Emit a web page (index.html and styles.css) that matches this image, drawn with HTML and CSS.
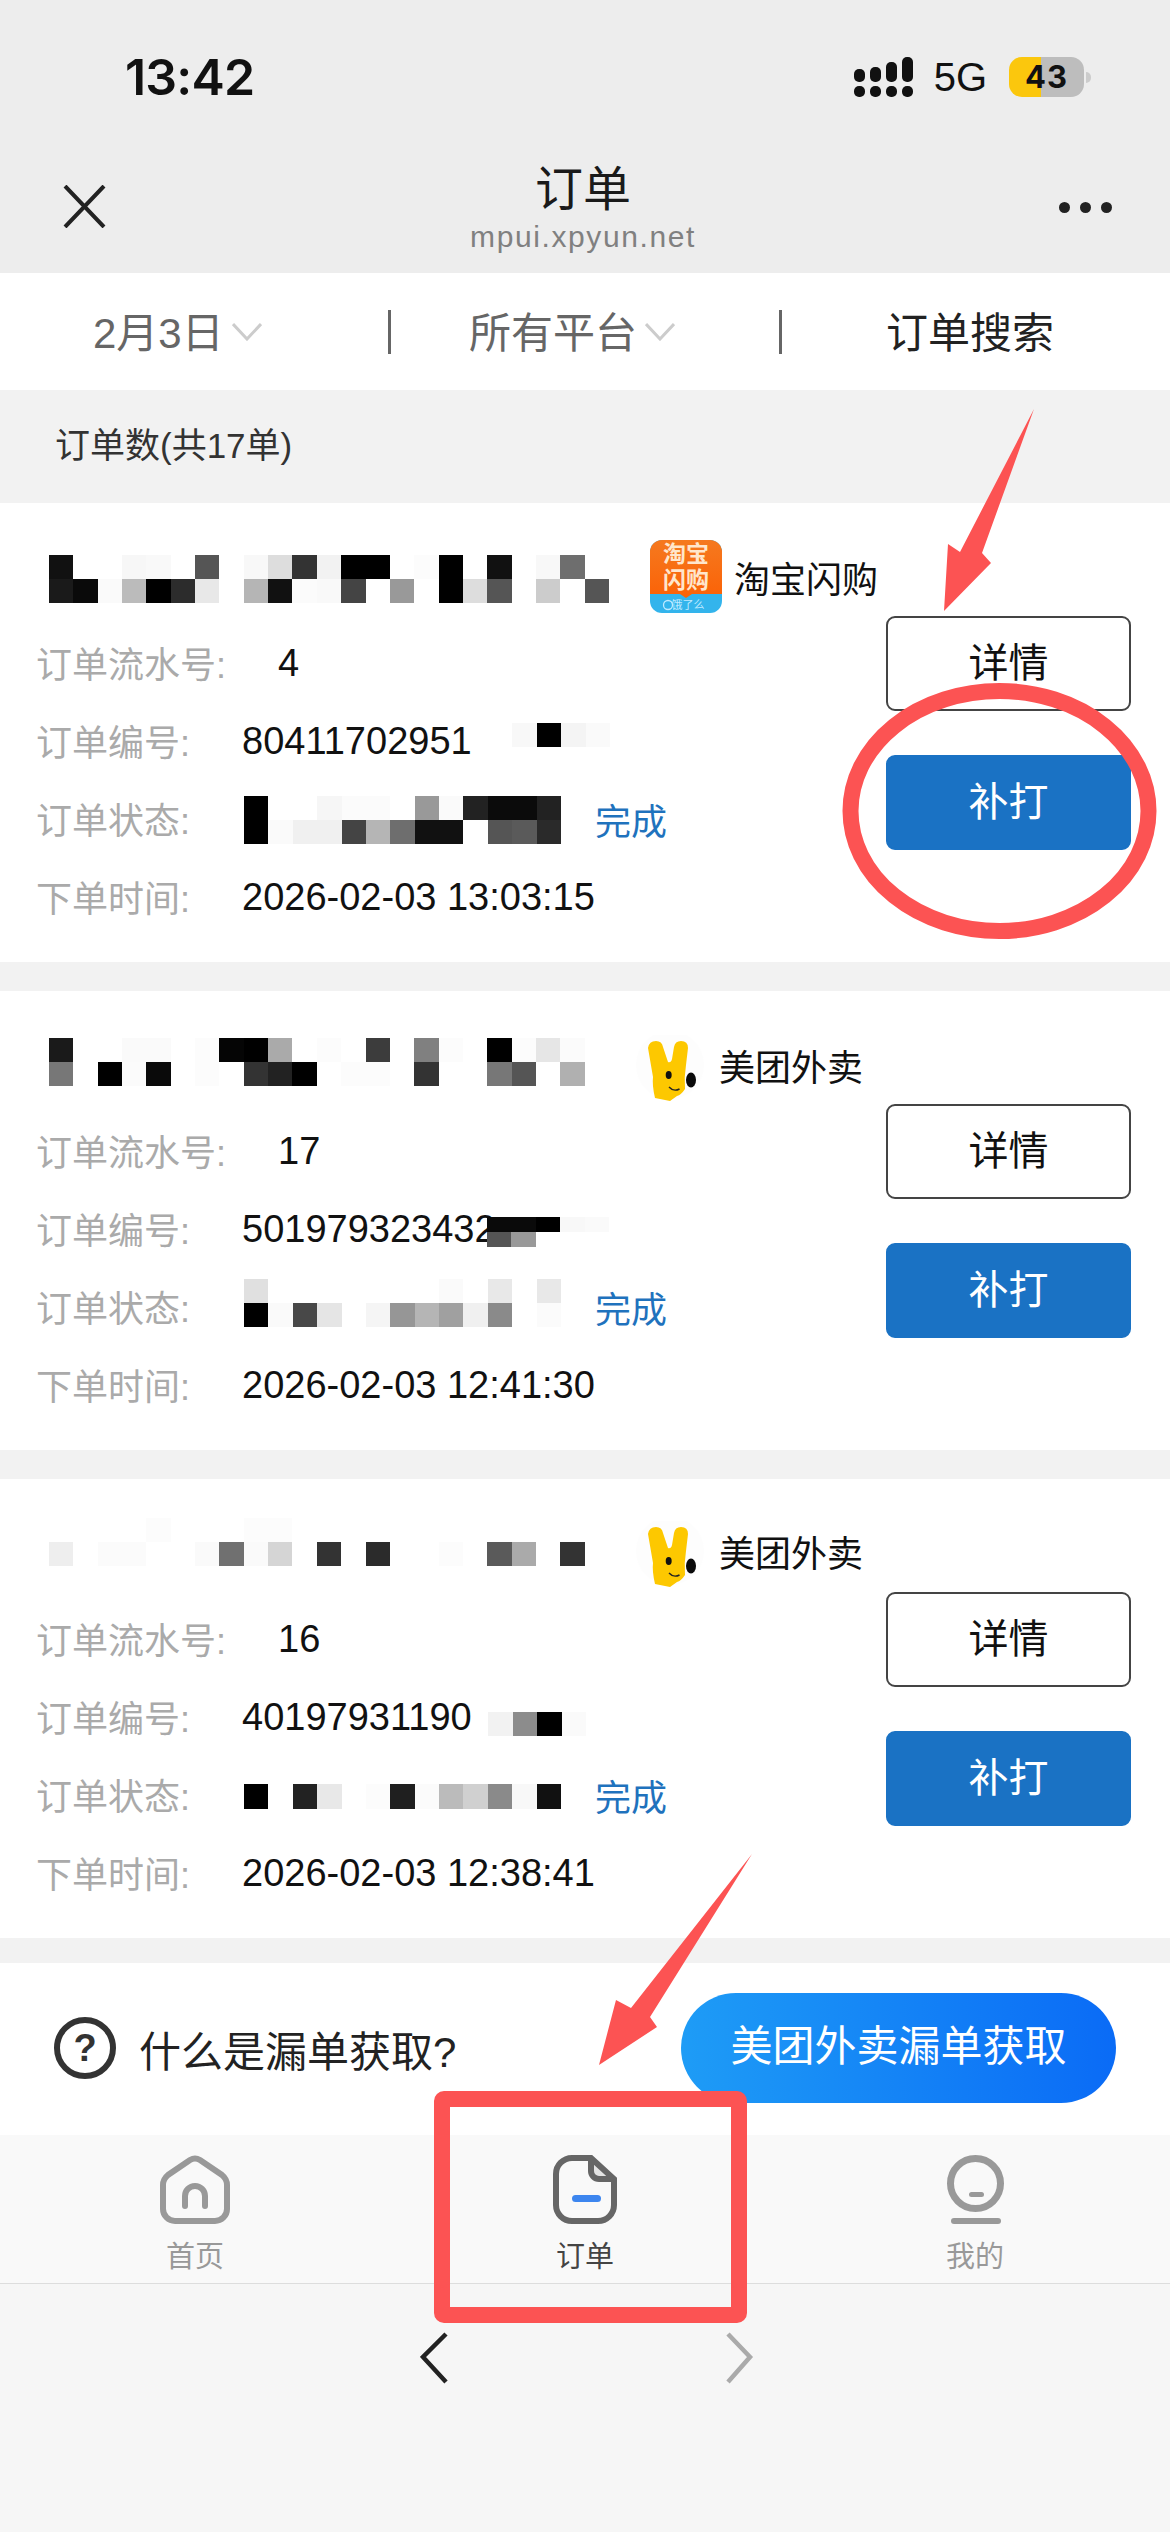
FILE: index.html
```html
<!DOCTYPE html>
<html lang="zh-CN">
<head>
    <meta charset="UTF-8">
    <meta name="viewport" content="width=device-width, initial-scale=1.0">
    <title>订单</title>
    <link rel="stylesheet" href="styles.css">
</head>
<body>
<div class="page">

    <div class="top">
        <div class="status">
            <span class="time">13:42</span>
            <div class="status-right">
                <svg class="signal" width="60" height="40" viewBox="0 0 60 40" fill="#111">
                    <rect x="0" y="12" width="11" height="13" rx="5"/>
                    <rect x="16" y="10" width="11" height="15" rx="5"/>
                    <rect x="32" y="5" width="11" height="20" rx="5"/>
                    <rect x="48" y="0" width="11" height="25" rx="5"/>
                    <rect x="0" y="29" width="11" height="11" rx="5"/>
                    <rect x="16" y="29" width="11" height="11" rx="5"/>
                    <rect x="32" y="29" width="11" height="11" rx="5"/>
                    <rect x="48" y="29" width="11" height="11" rx="5"/>
                </svg>
                <span class="net">5G</span>
                <span class="battery">43</span>
            </div>
        </div>
        <div class="nav">
            <svg class="nav-close" width="43" height="43" viewBox="0 0 43 43" fill="none" stroke="#222" stroke-width="4">
                <path d="M2,1 L41,42 M41,1 L2,42"/>
            </svg>
            <div class="nav-title">
                <div class="nav-name">订单</div>
                <div class="nav-url">mpui.xpyun.net</div>
            </div>
            <div class="nav-more"><i></i><i></i><i></i></div>
        </div>
    </div>

    <div class="filters">
        <div class="filter filter-date">2月3日
            <svg width="30" height="18" viewBox="0 0 30 18" fill="none" stroke="#ccc" stroke-width="3"><path d="M1,1 L15,16 L29,1"/></svg>
        </div>
        <div class="filter filter-platform">所有平台
            <svg width="30" height="18" viewBox="0 0 30 18" fill="none" stroke="#ccc" stroke-width="3"><path d="M1,1 L15,16 L29,1"/></svg>
        </div>
        <div class="filter filter-search">订单搜索</div>
    </div>

    <div class="count">订单数(共17单)</div>

    <div class="cards">

        <div class="card card-1">
            <div class="card-info">
                <div class="card-head">
                    <svg class="mask name-mask" viewBox="0 0 23 2" preserveAspectRatio="none" shape-rendering="crispEdges">
                        <rect x="0" y="0" width="1" height="1" fill="#111"/>
                        <rect x="3" y="0" width="1" height="1" fill="#f7f7f7"/>
                        <rect x="4" y="0" width="1" height="1" fill="#f9f9f9"/>
                        <rect x="6" y="0" width="1" height="1" fill="#555"/>
                        <rect x="8" y="0" width="1" height="1" fill="#f8f8f8"/>
                        <rect x="9" y="0" width="1" height="1" fill="#ddd"/>
                        <rect x="10" y="0" width="1" height="1" fill="#333"/>
                        <rect x="11" y="0" width="1" height="1" fill="#f2f2f2"/>
                        <rect x="12" y="0" width="2" height="1" fill="#000"/>
                        <rect x="15" y="0" width="1" height="1" fill="#fcfcfc"/>
                        <rect x="16" y="0" width="1" height="1" fill="#000"/>
                        <rect x="18" y="0" width="1" height="1" fill="#111"/>
                        <rect x="20" y="0" width="1" height="1" fill="#f8f8f8"/>
                        <rect x="21" y="0" width="1" height="1" fill="#6e6e6e"/>
                        <rect x="0" y="1" width="1" height="1" fill="#1a1a1a"/>
                        <rect x="1" y="1" width="1" height="1" fill="#0a0a0a"/>
                        <rect x="2" y="1" width="1" height="1" fill="#fafafa"/>
                        <rect x="3" y="1" width="1" height="1" fill="#bbb"/>
                        <rect x="4" y="1" width="1" height="1" fill="#000"/>
                        <rect x="5" y="1" width="1" height="1" fill="#2c2c2c"/>
                        <rect x="6" y="1" width="1" height="1" fill="#e8e8e8"/>
                        <rect x="8" y="1" width="1" height="1" fill="#b5b5b5"/>
                        <rect x="9" y="1" width="1" height="1" fill="#111"/>
                        <rect x="10" y="1" width="1" height="1" fill="#fbfbfb"/>
                        <rect x="11" y="1" width="1" height="1" fill="#f9f9f9"/>
                        <rect x="12" y="1" width="1" height="1" fill="#444"/>
                        <rect x="14" y="1" width="1" height="1" fill="#999"/>
                        <rect x="16" y="1" width="1" height="1" fill="#000"/>
                        <rect x="17" y="1" width="1" height="1" fill="#ddd"/>
                        <rect x="18" y="1" width="1" height="1" fill="#555"/>
                        <rect x="20" y="1" width="1" height="1" fill="#ccc"/>
                        <rect x="22" y="1" width="1" height="1" fill="#555"/>
                    </svg>
                    <div class="platform platform-tb">
                        <svg width="72" height="73" viewBox="0 0 72 73">
                            <defs>
                                <linearGradient id="tbOrange" x1="0" y1="0" x2="0" y2="1">
                                    <stop offset="0" stop-color="#f5791f"/>
                                    <stop offset="1" stop-color="#fb6207"/>
                                </linearGradient>
                            </defs>
                            <rect width="72" height="73" rx="12" fill="#33b4ec"/>
                            <path d="M0,12 A12,12 0 0 1 12,0 H60 A12,12 0 0 1 72,12 V54 H42 L36,58 L30,54 H0 Z" fill="url(#tbOrange)"/>
                            <text class="tb-big" x="36" y="22">淘宝</text>
                            <text class="tb-big" x="36" y="48">闪购</text>
                            <text class="tb-small" x="38" y="69">饿了么</text>
                            <circle cx="18" cy="65" r="4.5" fill="none" stroke="#bfeaff" stroke-width="1.3"/>
                        </svg>
                        <span class="platform-name">淘宝闪购</span>
                    </div>
                </div>
                <div class="row"><span class="label">订单流水号:</span><span class="value">4</span></div>
                <div class="row"><span class="label">订单编号:</span><span class="value order-no">80411702951</span>
                    <svg class="mask order-mask" viewBox="0 0 4 1" preserveAspectRatio="none" shape-rendering="crispEdges">
                        <rect x="0" y="0" width="1" height="1" fill="#f8f8f8"/>
                        <rect x="1" y="0" width="1" height="1" fill="#000"/>
                        <rect x="2" y="0" width="1" height="1" fill="#f4f4f4"/>
                        <rect x="3" y="0" width="1" height="1" fill="#fafafa"/>
                    </svg>
                </div>
                <div class="row"><span class="label">订单状态:</span>
                    <svg class="mask state-mask" viewBox="0 0 13 2" preserveAspectRatio="none" shape-rendering="crispEdges">
                        <rect x="0" y="0" width="1" height="2" fill="#000"/>
                        <rect x="3" y="0" width="1" height="1" fill="#f6f6f6"/>
                        <rect x="4" y="0" width="2" height="1" fill="#fbfbfb"/>
                        <rect x="7" y="0" width="1" height="1" fill="#999"/>
                        <rect x="8" y="0" width="1" height="1" fill="#fafafa"/>
                        <rect x="9" y="0" width="1" height="1" fill="#222"/>
                        <rect x="10" y="0" width="2" height="1" fill="#0b0b0b"/>
                        <rect x="12" y="0" width="1" height="1" fill="#222"/>
                        <rect x="1" y="1" width="1" height="1" fill="#fafafa"/>
                        <rect x="2" y="1" width="2" height="1" fill="#f0f0f0"/>
                        <rect x="4" y="1" width="1" height="1" fill="#444"/>
                        <rect x="5" y="1" width="1" height="1" fill="#b5b5b5"/>
                        <rect x="6" y="1" width="1" height="1" fill="#6e6e6e"/>
                        <rect x="7" y="1" width="2" height="1" fill="#111"/>
                        <rect x="10" y="1" width="1" height="1" fill="#555"/>
                        <rect x="11" y="1" width="1" height="1" fill="#5a5a5a"/>
                        <rect x="12" y="1" width="1" height="1" fill="#2a2a2a"/>
                    </svg>
                    <span class="state">完成</span>
                </div>
                <div class="row"><span class="label">下单时间:</span><span class="value">2026-02-03 13:03:15</span></div>
            </div>
            <div class="card-actions">
                <div class="btn btn-line">详情</div>
                <div class="btn btn-blue">补打</div>
            </div>
        </div>

        <div class="card card-2">
            <div class="card-info">
                <div class="card-head">
                    <svg class="mask name-mask" viewBox="0 0 23 2" preserveAspectRatio="none" shape-rendering="crispEdges">
                        <rect x="0" y="0" width="1" height="1" fill="#1a1a1a"/>
                        <rect x="3" y="0" width="2" height="1" fill="#fafafa"/>
                        <rect x="6" y="0" width="1" height="1" fill="#fcfcfc"/>
                        <rect x="7" y="0" width="1" height="1" fill="#050505"/>
                        <rect x="8" y="0" width="1" height="1" fill="#000"/>
                        <rect x="9" y="0" width="1" height="1" fill="#aaa"/>
                        <rect x="11" y="0" width="1" height="1" fill="#fcfcfc"/>
                        <rect x="13" y="0" width="1" height="1" fill="#3c3c3c"/>
                        <rect x="15" y="0" width="1" height="1" fill="#808080"/>
                        <rect x="16" y="0" width="1" height="1" fill="#fcfcfc"/>
                        <rect x="18" y="0" width="1" height="1" fill="#000"/>
                        <rect x="19" y="0" width="1" height="1" fill="#fcfcfc"/>
                        <rect x="20" y="0" width="1" height="1" fill="#e6e6e6"/>
                        <rect x="21" y="0" width="1" height="1" fill="#fbfbfb"/>
                        <rect x="0" y="1" width="1" height="1" fill="#777"/>
                        <rect x="2" y="1" width="1" height="1" fill="#000"/>
                        <rect x="3" y="1" width="1" height="1" fill="#fbfbfb"/>
                        <rect x="4" y="1" width="1" height="1" fill="#0a0a0a"/>
                        <rect x="6" y="1" width="1" height="1" fill="#fcfcfc"/>
                        <rect x="8" y="1" width="1" height="1" fill="#333"/>
                        <rect x="9" y="1" width="1" height="1" fill="#222"/>
                        <rect x="10" y="1" width="1" height="1" fill="#000"/>
                        <rect x="12" y="1" width="2" height="1" fill="#fcfcfc"/>
                        <rect x="15" y="1" width="1" height="1" fill="#333"/>
                        <rect x="18" y="1" width="1" height="1" fill="#777"/>
                        <rect x="19" y="1" width="1" height="1" fill="#555"/>
                        <rect x="21" y="1" width="1" height="1" fill="#b0b0b0"/>
                    </svg>
                    <div class="platform">
                        <svg class="mt-logo" width="72" height="72" viewBox="0 0 72 72">
                            <circle cx="34" cy="30" r="34" fill="#fdfdfd"/>
                            <path d="M12,13 Q13,6 20,6 Q26,6 27,12 L32,27 Q35,28 36,24 L38,12 Q39,6 45,6 Q52,6 52,13 L50,30 Q48,42 49,54 Q45,60 41,61 L34,66 L19,63 Q16,50 17,42 Z" fill="#fdc800"/>
                            <ellipse cx="55" cy="45" rx="5" ry="7.5" fill="#0a0a0a"/>
                            <ellipse cx="32.7" cy="40" rx="3" ry="4" fill="#111"/>
                            <path d="M33,52 Q37.5,57 43.5,54" fill="none" stroke="#222" stroke-width="1.4"/>
                        </svg>
                        <span class="platform-name">美团外卖</span>
                    </div>
                </div>
                <div class="row"><span class="label">订单流水号:</span><span class="value">17</span></div>
                <div class="row"><span class="label">订单编号:</span><span class="value order-no">501979323432</span>
                    <svg class="mask order-mask" viewBox="0 0 5 2" preserveAspectRatio="none" shape-rendering="crispEdges">
                        <rect x="0" y="0" width="2" height="1" fill="#0a0a0a"/>
                        <rect x="2" y="0" width="1" height="1" fill="#000"/>
                        <rect x="3" y="0" width="1" height="1" fill="#f8f8f8"/>
                        <rect x="4" y="0" width="1" height="1" fill="#fafafa"/>
                        <rect x="0" y="1" width="1" height="1" fill="#555"/>
                        <rect x="1" y="1" width="1" height="1" fill="#999"/>
                    </svg>
                </div>
                <div class="row"><span class="label">订单状态:</span>
                    <svg class="mask state-mask" viewBox="0 0 13 2" preserveAspectRatio="none" shape-rendering="crispEdges">
                        <rect x="0" y="0" width="1" height="1" fill="#e0e0e0"/>
                        <rect x="8" y="0" width="1" height="1" fill="#fafafa"/>
                        <rect x="10" y="0" width="1" height="1" fill="#e8e8e8"/>
                        <rect x="12" y="0" width="1" height="1" fill="#e8e8e8"/>
                        <rect x="0" y="1" width="1" height="1" fill="#000"/>
                        <rect x="1" y="1" width="1" height="1" fill="#fafafa"/>
                        <rect x="2" y="1" width="1" height="1" fill="#484848"/>
                        <rect x="3" y="1" width="1" height="1" fill="#e5e5e5"/>
                        <rect x="5" y="1" width="1" height="1" fill="#f5f5f5"/>
                        <rect x="6" y="1" width="1" height="1" fill="#969696"/>
                        <rect x="7" y="1" width="1" height="1" fill="#b5b5b5"/>
                        <rect x="8" y="1" width="1" height="1" fill="#a0a0a0"/>
                        <rect x="9" y="1" width="1" height="1" fill="#f0f0f0"/>
                        <rect x="10" y="1" width="1" height="1" fill="#8a8a8a"/>
                        <rect x="12" y="1" width="1" height="1" fill="#fbfbfb"/>
                    </svg>
                    <span class="state">完成</span>
                </div>
                <div class="row"><span class="label">下单时间:</span><span class="value">2026-02-03 12:41:30</span></div>
            </div>
            <div class="card-actions">
                <div class="btn btn-line">详情</div>
                <div class="btn btn-blue">补打</div>
            </div>
        </div>

        <div class="card card-3">
            <div class="card-info">
                <div class="card-head">
                    <svg class="mask name-mask" viewBox="0 0 23 2" preserveAspectRatio="none" shape-rendering="crispEdges">
                        <rect x="4" y="0" width="1" height="1" fill="#fcfcfc"/>
                        <rect x="8" y="0" width="2" height="1" fill="#fcfcfc"/>
                        <rect x="0" y="1" width="1" height="1" fill="#eee"/>
                        <rect x="2" y="1" width="2" height="1" fill="#fbfbfb"/>
                        <rect x="6" y="1" width="1" height="1" fill="#fafafa"/>
                        <rect x="7" y="1" width="1" height="1" fill="#707070"/>
                        <rect x="8" y="1" width="1" height="1" fill="#fafafa"/>
                        <rect x="9" y="1" width="1" height="1" fill="#d5d5d5"/>
                        <rect x="11" y="1" width="1" height="1" fill="#333"/>
                        <rect x="13" y="1" width="1" height="1" fill="#2b2b2b"/>
                        <rect x="16" y="1" width="1" height="1" fill="#fcfcfc"/>
                        <rect x="18" y="1" width="1" height="1" fill="#5a5a5a"/>
                        <rect x="19" y="1" width="1" height="1" fill="#aaa"/>
                        <rect x="21" y="1" width="1" height="1" fill="#333"/>
                    </svg>
                    <div class="platform">
                        <svg class="mt-logo" width="72" height="72" viewBox="0 0 72 72">
                            <circle cx="34" cy="30" r="34" fill="#fdfdfd"/>
                            <path d="M12,13 Q13,6 20,6 Q26,6 27,12 L32,27 Q35,28 36,24 L38,12 Q39,6 45,6 Q52,6 52,13 L50,30 Q48,42 49,54 Q45,60 41,61 L34,66 L19,63 Q16,50 17,42 Z" fill="#fdc800"/>
                            <ellipse cx="55" cy="45" rx="5" ry="7.5" fill="#0a0a0a"/>
                            <ellipse cx="32.7" cy="40" rx="3" ry="4" fill="#111"/>
                            <path d="M33,52 Q37.5,57 43.5,54" fill="none" stroke="#222" stroke-width="1.4"/>
                        </svg>
                        <span class="platform-name">美团外卖</span>
                    </div>
                </div>
                <div class="row"><span class="label">订单流水号:</span><span class="value">16</span></div>
                <div class="row"><span class="label">订单编号:</span><span class="value order-no">40197931190</span>
                    <svg class="mask order-mask" viewBox="0 0 4 1" preserveAspectRatio="none" shape-rendering="crispEdges">
                        <rect x="0" y="0" width="1" height="1" fill="#f2f2f2"/>
                        <rect x="1" y="0" width="1" height="1" fill="#8c8c8c"/>
                        <rect x="2" y="0" width="1" height="1" fill="#000"/>
                        <rect x="3" y="0" width="1" height="1" fill="#fafafa"/>
                    </svg>
                </div>
                <div class="row"><span class="label">订单状态:</span>
                    <svg class="mask state-mask" viewBox="0 0 13 1" preserveAspectRatio="none" shape-rendering="crispEdges">
                        <rect x="0" y="0" width="1" height="1" fill="#000"/>
                        <rect x="2" y="0" width="1" height="1" fill="#222"/>
                        <rect x="3" y="0" width="1" height="1" fill="#e8e8e8"/>
                        <rect x="5" y="0" width="1" height="1" fill="#fcfcfc"/>
                        <rect x="6" y="0" width="1" height="1" fill="#1f1f1f"/>
                        <rect x="7" y="0" width="1" height="1" fill="#fbfbfb"/>
                        <rect x="8" y="0" width="1" height="1" fill="#bbb"/>
                        <rect x="9" y="0" width="1" height="1" fill="#d0d0d0"/>
                        <rect x="10" y="0" width="1" height="1" fill="#8a8a8a"/>
                        <rect x="11" y="0" width="1" height="1" fill="#f8f8f8"/>
                        <rect x="12" y="0" width="1" height="1" fill="#111"/>
                    </svg>
                    <span class="state">完成</span>
                </div>
                <div class="row"><span class="label">下单时间:</span><span class="value">2026-02-03 12:38:41</span></div>
            </div>
            <div class="card-actions">
                <div class="btn btn-line">详情</div>
                <div class="btn btn-blue">补打</div>
            </div>
        </div>

    </div>

    <div class="missed">
        <div class="missed-help">
            <span class="help-icon">?</span>
            <span>什么是漏单获取?</span>
        </div>
        <div class="missed-btn">美团外卖漏单获取</div>
    </div>

    <div class="tabs">
        <div class="tab">
            <svg width="70" height="69" viewBox="0 0 70 69" fill="none" stroke="#999" stroke-width="6">
                <path d="M30,5 Q35,2 40,5 L62,20 Q67,24 67,30 V54 A12,12 0 0 1 55,66 H15 A12,12 0 0 1 3,54 V30 Q3,24 8,20 Z"/>
                <path d="M25,51 V41 A10,10 0 0 1 45,41 V51" stroke-linecap="round"/>
            </svg>
            <span>首页</span>
        </div>
        <div class="tab tab-active">
            <svg width="64" height="69" viewBox="0 0 64 69" fill="none" stroke="#666" stroke-width="6">
                <path d="M38,3 L61,24 H46 A8,8 0 0 1 38,16 Z" fill="#e4e4e4" stroke="none"/>
                <path d="M19,3 H38 L61,24 V50 A16,16 0 0 1 45,66 H19 A16,16 0 0 1 3,50 V19 A16,16 0 0 1 19,3 Z"/>
                <path d="M38,3 V16 A8,8 0 0 0 46,24 H61"/>
                <rect x="19" y="40" width="29" height="7" rx="3.5" fill="#3d86ef" stroke="none"/>
            </svg>
            <span>订单</span>
        </div>
        <div class="tab">
            <svg width="57" height="69" viewBox="0 0 57 69" fill="#999">
                <circle cx="28.5" cy="28.5" r="25" fill="none" stroke="#999" stroke-width="7"/>
                <rect x="22" y="37" width="15" height="5" rx="2.5"/>
                <rect x="4" y="63" width="50" height="6" rx="3"/>
            </svg>
            <span>我的</span>
        </div>
    </div>

    <div class="pager">
        <svg width="30" height="52" viewBox="0 0 30 52" fill="none" stroke="#222" stroke-width="4.5"><path d="M26,2 L3,25 L26,50"/></svg>
        <svg width="30" height="52" viewBox="0 0 30 52" fill="none" stroke="#aaa" stroke-width="4.5"><path d="M4,2 L26,25 L4,50"/></svg>
    </div>

    <svg class="marks" width="1170" height="2532" viewBox="0 0 1170 2532">
        <path d="M1034,409 L982,553 L991,563 L944,611 L948,544 L960,552 Z" fill="#fc5353"/>
        <ellipse cx="999.5" cy="811" rx="149" ry="120" fill="none" stroke="#fc5353" stroke-width="16"/>
        <path d="M752,1854 L650,2017 L657,2027 L599,2065 L616,2000 L631,2008 Z" fill="#fc5353"/>
        <rect x="442" y="2099" width="297" height="216" rx="2" fill="none" stroke="#fc5353" stroke-width="16"/>
    </svg>

</div>
</body>
</html>
```

FILE: styles.css
```css
body {
    margin: 0;
    padding: 0;
    background-color: #f6f6f6;
    font-family: "Liberation Sans", "Noto Sans CJK SC", sans-serif;
    color: #111;
}
.page {
    position: relative;
    width: 1170px;
    height: 2532px;
    overflow: hidden;
}

/* status bar and title */
.top {
    height: 273px;
    box-sizing: border-box;
    padding-top: 57px;
    background-color: #ededed;
}
.status {
    display: flex;
    justify-content: space-between;
    align-items: center;
    height: 40px;
    padding: 0 86px 0 125px;
}
.time {
    font-family: Inter, "Liberation Sans", sans-serif;
    font-size: 50px;
    font-weight: 600;
    letter-spacing: -0.8px;
}
.status-right {
    display: flex;
    align-items: center;
}
.net {
    margin-left: 20px;
    font-size: 40px;
}
.battery {
    position: relative;
    width: 75px;
    height: 40px;
    margin-left: 22px;
    border-radius: 13px;
    background: linear-gradient(to right, #fbc70d 32px, #bdbdbd 32px);
    text-align: center;
    font-family: Inter, "Liberation Sans", sans-serif;
    font-size: 31px;
    font-weight: 700;
    line-height: 40px;
    letter-spacing: 1px;
}
.battery::after {
    content: "";
    position: absolute;
    right: -7px;
    top: 15px;
    width: 5px;
    height: 11px;
    border-radius: 0 5px 5px 0;
    background-color: #ccc;
}
.nav {
    display: grid;
    grid-template-columns: 1fr auto 1fr;
    margin-top: 63px;
    padding: 0 62px 0 58px;
}
.nav-close {
    margin: 25px 0 0 5px;
}
.nav-title {
    text-align: center;
}
.nav-name {
    font-size: 48px;
    line-height: 60px;
    color: #1a1a1a;
}
.nav-url {
    font-size: 30px;
    line-height: 34px;
    letter-spacing: 1.6px;
    color: #808080;
}
.nav-more {
    display: flex;
    justify-self: end;
    gap: 10px;
    margin: 42px -4px 0 0;
}
.nav-more i {
    width: 11px;
    height: 11px;
    border-radius: 50%;
    background-color: #222;
}

/* filters */
.filters {
    display: grid;
    grid-template-columns: repeat(3, 390px);
    align-items: center;
    height: 117px;
    background-color: #fff;
    font-size: 42px;
}
.filter {
    display: flex;
    align-items: center;
    gap: 8px;
    height: 44px;
    box-sizing: border-box;
    padding-bottom: 5px;
    color: #666;
}
.filter svg {
    margin-top: 6px;
}
.filter-date {
    margin-right: -1px;
    padding-left: 93px;
    border-right: 3px solid #666;
}
.filter-platform {
    margin-right: -2px;
    padding-left: 79px;
    border-right: 3px solid #666;
}
.filter-search {
    padding-left: 106px;
    color: #222;
}

.count {
    height: 113px;
    box-sizing: border-box;
    padding: 0 0 0 55px;
    background-color: #f2f2f2;
    font-size: 35px;
    line-height: 112px;
    color: #333;
}

/* order cards */
.cards {
    display: flex;
    flex-direction: column;
    gap: 29px;
    padding-bottom: 25px;
    background-color: #f2f2f2;
}
.card {
    display: flex;
    justify-content: space-between;
    height: 459px;
    padding: 0 39px 0 36px;
    background-color: #fff;
}
.card-head {
    display: flex;
    align-items: flex-start;
    height: 121px;
}
.mask {
    display: block;
    flex: none;
}
.name-mask {
    width: 560px;
    height: 48px;
    margin-left: 13px;
}
.card-1 .name-mask { margin-top: 52px; }
.card-2 .name-mask { margin-top: 47px; }
.card-3 .name-mask { margin-top: 39px; }
.platform {
    display: flex;
    align-items: center;
    gap: 11px;
    height: 73px;
    margin-top: 37px;
    margin-left: 27px;
}
.card-3 .platform { margin-top: 35px; }
.platform-tb {
    gap: 12px;
    margin-left: 41px;
}
.mt-logo {
    margin-top: 13px;
}
.platform-name {
    font-size: 36px;
    white-space: nowrap;
}
.tb-big {
    fill: #ffe6cc;
    font-size: 23px;
    font-weight: 700;
    text-anchor: middle;
}
.tb-small {
    fill: #bfeaff;
    font-size: 11px;
    text-anchor: middle;
}
.row {
    display: flex;
    align-items: center;
    height: 78px;
    font-size: 36px;
    white-space: nowrap;
}
.label {
    margin-right: 52px;
    padding-bottom: 2px;
    color: #aaa;
}
.value {
    font-size: 38px;
}
.card-1 .order-no { width: 236px; }
.card-2 .order-no { width: 247px; }
.card-3 .order-no { width: 221px; }
.order-mask {
    align-self: flex-start;
    height: 24px;
}
.card-1 .order-mask { width: 98px; margin: 21px 0 0 34px; }
.card-2 .order-mask { width: 122px; height: 30px; margin: 27px 0 0 -2px; }
.card-3 .order-mask { width: 98px; margin: 34px 0 0 25px; }
.state-mask {
    align-self: flex-start;
    width: 317px;
    height: 48px;
    margin-left: 2px;
}
.card-1 .state-mask { margin-top: 16px; }
.card-2 .state-mask { margin-top: 11px; }
.card-3 .state-mask { height: 25px; margin-top: 28px; }
.state {
    margin-left: 34px;
    color: #1f72bd;
}
.card-actions {
    display: flex;
    flex-direction: column;
    gap: 44px;
    padding-top: 113px;
}
.btn {
    width: 245px;
    height: 95px;
    box-sizing: border-box;
    border-radius: 9px;
    text-align: center;
    font-size: 40px;
    line-height: 91px;
}
.btn-line {
    border: 2px solid #444;
    background-color: #fff;
}
.btn-blue {
    border: 2px solid #1a72c4;
    background-color: #1a72c4;
    color: #fff;
}

/* missed orders */
.missed {
    display: flex;
    justify-content: space-between;
    align-items: center;
    height: 172px;
    box-sizing: border-box;
    padding: 0 54px 2px;
    background-color: #fff;
}
.missed-help {
    display: flex;
    align-items: center;
    gap: 23px;
    font-size: 42px;
    color: #222;
}
.help-icon {
    width: 62px;
    height: 62px;
    box-sizing: border-box;
    border: 6px solid #333;
    border-radius: 50%;
    text-align: center;
    font-size: 38px;
    font-weight: 700;
    line-height: 50px;
    color: #333;
}
.missed-btn {
    width: 435px;
    height: 110px;
    border-radius: 55px;
    background: linear-gradient(to right, #1e9cf6, #0a6bf6);
    text-align: center;
    font-size: 42px;
    line-height: 108px;
    color: #fff;
}

/* tab bar */
.tabs {
    display: grid;
    grid-template-columns: repeat(3, 390px);
    height: 149px;
    box-sizing: border-box;
    border-bottom: 1px solid #ddd;
    background-color: #f9f9f9;
}
.tab {
    display: flex;
    flex-direction: column;
    align-items: center;
    padding-top: 20px;
    font-size: 29px;
    line-height: 40px;
    color: #999;
}
.tab span {
    margin-top: 13px;
}
.tab-active {
    color: #444;
}
.pager {
    display: flex;
    gap: 274px;
    padding: 48px 0 0 420px;
}

/* hand drawn marks over the screenshot */
.marks {
    position: absolute;
    left: 0;
    top: 0;
    pointer-events: none;
}
```
